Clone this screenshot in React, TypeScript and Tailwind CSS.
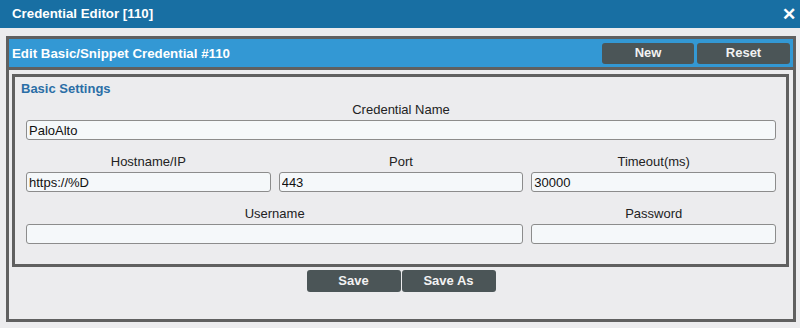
import React from 'react';

const font = { fontFamily: '"Liberation Sans", Arial, sans-serif' };

const Field: React.FC<{ label: string; value?: string; className?: string }> = ({ label, value = '', className = '' }) => (
    <div className={`flex flex-col ${className}`}>
        <label className="text-center text-[13px] leading-[16px] text-[#222] mb-[2px]">{label}</label>
        <input
            readOnly
            value={value}
            className="h-[20px] w-full rounded-[3px] border border-[#8c8c8c] bg-[#f5f8fa] px-[2px] text-[13px] text-[#111] outline-none"
        />
    </div>
);

const DarkButton: React.FC<{ label: string; className?: string }> = ({ label, className = '' }) => (
    <button className={`rounded-[3px] bg-[#4b5557] text-[13px] font-bold text-[#f2f2f2] ${className}`}>{label}</button>
);

const App: React.FC = () => {
    return (
        <div className="h-[328px] w-[800px] bg-[#ececee]" style={font}>
            <div className="flex h-[28px] items-center justify-between bg-[#186fa3] pl-[12px] pr-[4px]">
                <span className="text-[13.3px] font-bold text-white">Credential Editor [110]</span>
                <span className="text-[17px] font-bold leading-none text-white">✕</span>
            </div>

            <div className="ml-[6px] mt-[8px] flex h-[286px] w-[790px] flex-col border-[3px] border-[#606060]">
                <div className="flex h-[31px] items-center justify-between border-b-[3px] border-[#606060] bg-[#3398d4] pl-[3px] pr-[3px]">
                    <span className="mt-[1px] text-[13.3px] font-bold text-white">Edit Basic/Snippet Credential #110</span>
                    <div className="flex gap-[3px]">
                        <DarkButton label="New" className="h-[21px] w-[92px]" />
                        <DarkButton label="Reset" className="h-[21px] w-[93px]" />
                    </div>
                </div>

                <div className="ml-[3px] mt-[4px] h-[193px] w-[777px] border-[3px] border-[#606060]">
                    <div className="mt-[4px] pl-[6px] text-[13px] font-bold leading-[16px] text-[#2a6ea6]">Basic Settings</div>
                    <div className="mt-[5px] grid grid-cols-3 gap-x-[8px] gap-y-[14px] pl-[11px] pr-[10px]">
                        <Field label="Credential Name" value="PaloAlto" className="col-span-3" />
                        <Field label="Hostname/IP" value="https://%D" />
                        <Field label="Port" value="443" />
                        <Field label="Timeout(ms)" value="30000" />
                        <Field label="Username" className="col-span-2" />
                        <Field label="Password" />
                    </div>
                </div>

                <div className="mt-[3px] flex justify-center gap-[1px]">
                    <DarkButton label="Save" className="h-[22px] w-[94px]" />
                    <DarkButton label="Save As" className="h-[22px] w-[94px]" />
                </div>
            </div>
        </div>
    );
};

export default App;
